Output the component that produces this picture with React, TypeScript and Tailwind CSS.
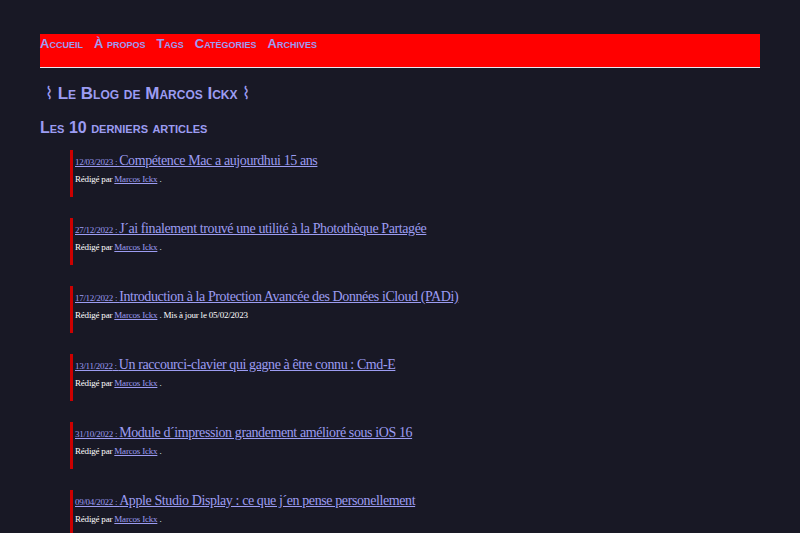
import React from "react";

const nav = ["Accueil", "À propos", "Tags", "Catégories", "Archives"];

const posts = [
  { date: "12/03/2023", title: "Compétence Mac a aujourdhui 15 ans" },
  { date: "27/12/2022", title: "J´ai finalement trouvé une utilité à la Photothèque Partagée" },
  {
    date: "17/12/2022",
    title: "Introduction à la Protection Avancée des Données iCloud (PADi)",
    updated: "05/02/2023",
  },
  { date: "13/11/2022", title: "Un raccourci-clavier qui gagne à être connu : Cmd-E" },
  { date: "31/10/2022", title: "Module d´impression grandement amélioré sous iOS 16" },
  { date: "09/04/2022", title: "Apple Studio Display : ce que j´en pense personellement" },
];

export default function App() {
  return (
    <div className="bg-[#181825] pt-[34px] px-[40px] overflow-hidden h-[533px]">
      {/* Nav bar */}
      <nav className="bg-[#ff0000] h-[34px] border-b border-[#e8e8f0] flex items-start pt-[2px] gap-[11px] font-['Liberation_Sans',Arial,sans-serif] font-bold text-[13px] [font-variant:small-caps] text-[#9c9cf2]">
        {nav.map((n) => (
          <a key={n} href="#" className="leading-[16px]">
            {n}
          </a>
        ))}
      </nav>

      <h1 className="mt-[14px] ml-[5px] font-['Liberation_Sans',Arial,sans-serif] font-bold text-[17px] [font-variant:small-caps] text-[#9c9cf2] leading-[24px]">
        <span className="font-normal">⌇</span> Le Blog de Marcos Ickx <span className="font-normal">⌇</span>
      </h1>

      <h2 className="mt-[12px] font-['Liberation_Sans',Arial,sans-serif] font-bold text-[16px] [font-variant:small-caps] text-[#9c9cf2] leading-[20px]">
        Les 10 derniers articles
      </h2>

      <div className="mt-[12px] ml-[30px] flex flex-col gap-[21px] font-['Liberation_Serif','Times_New_Roman',serif]">
        {posts.map((p) => (
          <div key={p.date} className="border-l-[3px] border-[#cc0000] pl-[2px] pt-[1px] h-[47px]">
            <a href="#" className="underline text-[#9c9cf2] leading-[18px] block tracking-[-0.4px]">
              <span className="text-[9px] tracking-[-0.3px]">{p.date} : </span>
              <span className="text-[14px]">{p.title}</span>
            </a>
            <p className="mt-[2px] text-[9px] tracking-[-0.2px] text-white leading-[12px]">
              Rédigé par{" "}
              <a href="#" className="underline text-[#9c9cf2]">
                Marcos Ickx
              </a>{" "}
              .{p.updated ? ` Mis à jour le ${p.updated}` : ""}
            </p>
          </div>
        ))}
      </div>
    </div>
  );
}
